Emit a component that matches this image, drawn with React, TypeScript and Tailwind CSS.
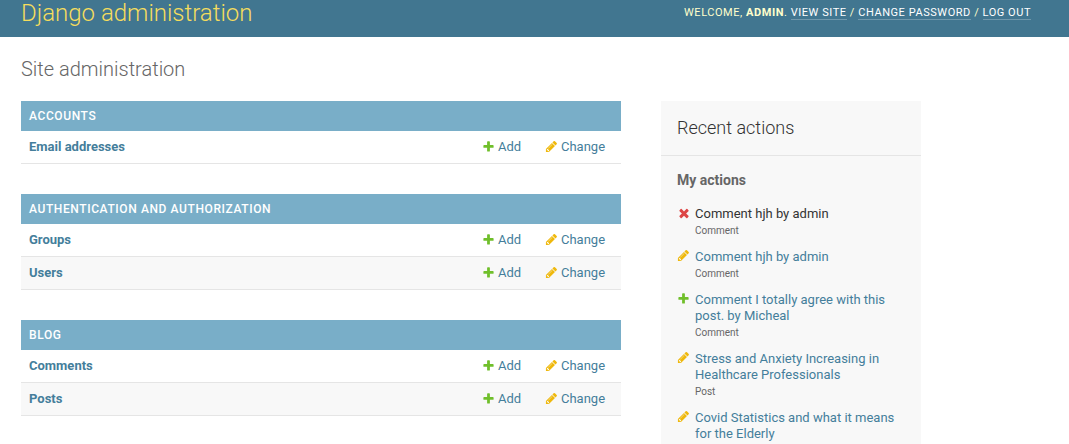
type IconKind = "add" | "change" | "delete";

const icons: Record<IconKind, { color: string; path: string }> = {
  add: {
    color: "#70bf2b",
    path: "M1600 796v192q0 40-28 68t-68 28h-416v416q0 40-28 68t-68 28H800q-40 0-68-28t-28-68v-416H288q-40 0-68-28t-28-68V796q0-40 28-68t68-28h416V284q0-40 28-68t68-28h192q40 0 68 28t28 68v416h416q40 0 68 28t28 68z",
  },
  change: {
    color: "#efb80b",
    path: "M491 1536l91-91-235-235-91 91v107h128v128h107zm523-928q0-22-22-22-10 0-17 7l-542 542q-7 7-7 17 0 22 22 22 10 0 17-7l542-542q7-7 7-17zm-54-192l416 416-832 832H128v-416zm683 96q0 53-37 90l-166 166-416-416 166-165q36-38 90-38 53 0 91 38l235 234q37 39 37 91z",
  },
  delete: {
    color: "#dd4646",
    path: "M1490 1322q0 40-28 68l-136 136q-28 28-68 28t-68-28l-294-294-294 294q-28 28-68 28t-68-28l-136-136q-28-28-28-68t28-68l294-294-294-294q-28-28-28-68t28-68l136-136q28-28 68-28t68 28l294 294 294-294q28-28 68-28t68 28l136 136q28 28 28 68t-28 68l-294 294 294 294q28 28 28 68z",
  },
};

function Icon({ kind }: { kind: IconKind }) {
  const { color, path } = icons[kind];
  return (
    <svg
      className={kind === "delete" ? "size-[14px] shrink-0" : "size-[13px] shrink-0"}
      viewBox="0 0 1792 1792"
      fill={color}
      aria-hidden="true"
    >
      <path d={path} />
    </svg>
  );
}

const apps = [
  { name: "Accounts", models: ["Email addresses"] },
  { name: "Authentication and Authorization", models: ["Groups", "Users"] },
  { name: "Blog", models: ["Comments", "Posts"] },
];

const actions: { kind: IconKind; title: string; type?: string }[] = [
  { kind: "delete", title: "Comment hjh by admin", type: "Comment" },
  { kind: "change", title: "Comment hjh by admin", type: "Comment" },
  { kind: "add", title: "Comment I totally agree with this post. by Micheal", type: "Comment" },
  { kind: "change", title: "Stress and Anxiety Increasing in Healthcare Professionals", type: "Post" },
  { kind: "change", title: "Covid Statistics and what it means for the Elderly" },
];

function ToolLink({ children }: { children: string }) {
  return (
    <a href="#" className="border-b border-white/25 text-white">
      {children}
    </a>
  );
}

function ActionLink({ kind, label }: { kind: IconKind; label: string }) {
  return (
    <a href="#" className="flex items-start gap-[3px] text-[#447e9b]">
      <span className="pt-px">
        <Icon kind={kind} />
      </span>
      {label}
    </a>
  );
}

function AppTable({ name, models }: { name: string; models: string[] }) {
  return (
    <table className="mb-[30px] w-full table-fixed border-collapse">
      <caption className="bg-[#79aec8] px-2 py-[7px] text-left text-xs leading-4 font-medium tracking-wider text-white uppercase">
        <a href="#">{name}</a>
      </caption>
      <tbody>
        {models.map((model) => (
          <tr key={model} className="border-b border-[#e5e5e5] even:bg-[#f8f8f8]">
            <th scope="row" className="px-2 py-2 text-left font-bold">
              <a href="#" className="text-[#447e9b]">
                {model}
              </a>
            </th>
            <td className="w-[63px] py-2 pl-2">
              <ActionLink kind="add" label="Add" />
            </td>
            <td className="w-[84px] py-2 pl-2">
              <ActionLink kind="change" label="Change" />
            </td>
          </tr>
        ))}
      </tbody>
    </table>
  );
}

export default function App() {
  return (
    <div className="min-h-screen bg-white font-['Roboto','Liberation_Sans',sans-serif] text-[13px] leading-4 text-[#333]">
      <header className="flex items-start justify-between bg-[#417690] pr-[38px] pb-[11px] pl-[21px] text-[#ffc]">
        <h1 className="text-2xl leading-[26px] font-light text-[#f5dd5d]">
          <a href="#">Django administration</a>
        </h1>
        <div className="pt-[6px] text-[11px] leading-[14px] tracking-wider uppercase">
          Welcome, <strong className="font-bold">admin</strong>. <ToolLink>View site</ToolLink> /{" "}
          <ToolLink>Change password</ToolLink> / <ToolLink>Log out</ToolLink>
        </div>
      </header>
      <main className="px-[21px] pt-5">
        <h1 className="mb-5 text-xl leading-6 font-light text-[#666]">Site administration</h1>
        <div className="flex items-start gap-10">
          <div className="max-w-[600px] grow">
            {apps.map((app) => (
              <AppTable key={app.name} {...app} />
            ))}
          </div>
          <aside className="w-[260px] shrink-0 bg-[#f8f8f8]">
            <h2 className="border-b border-[#e5e5e5] p-4 text-lg leading-[22px] font-light">Recent actions</h2>
            <div className="px-4 pt-4">
              <h3 className="mb-[17px] text-sm leading-[17px] font-bold text-[#666]">My actions</h3>
              <ul>
                {actions.map((action, index) => (
                  <li key={index} className="flex gap-1 pb-[10px]">
                    <span className="w-[14px] shrink-0">
                      <Icon kind={action.kind} />
                    </span>
                    <div>
                      {action.kind === "delete" ? (
                        <p>{action.title}</p>
                      ) : (
                        <a href="#" className="block text-[#447e9b]">
                          {action.title}
                        </a>
                      )}
                      {action.type && <p className="pt-px text-[10px] leading-4 text-[#666]">{action.type}</p>}
                    </div>
                  </li>
                ))}
              </ul>
            </div>
          </aside>
        </div>
      </main>
    </div>
  );
}
